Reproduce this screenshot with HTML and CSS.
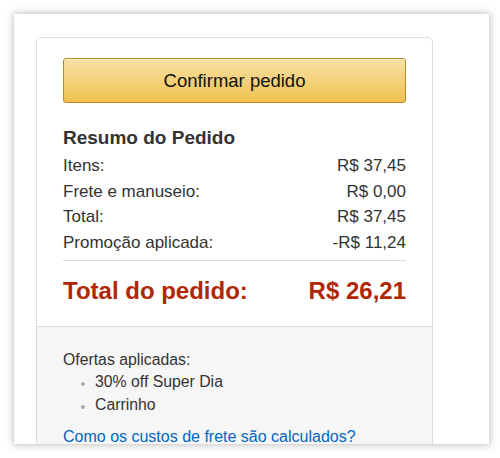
FILE: index.html
```html
<!DOCTYPE html>
<html lang="pt-BR">
<head>
<meta charset="utf-8">
<link rel="stylesheet" href="styles.css">
</head>
<body>
<div class="frame">
  <div class="box">
    <div class="top">
      <button class="confirm">Confirmar pedido</button>
      <h2 class="title">Resumo do Pedido</h2>
      <div class="row"><span>Itens:</span><span>R$ 37,45</span></div>
      <div class="row"><span>Frete e manuseio:</span><span>R$ 0,00</span></div>
      <div class="row"><span>Total:</span><span>R$ 37,45</span></div>
      <div class="row"><span>Promoção aplicada:</span><span>-R$ 11,24</span></div>
      <div class="grand"><span>Total do pedido:</span><span>R$ 26,21</span></div>
    </div>
    <div class="bottom">
      <div class="offers">Ofertas aplicadas:</div>
      <ul class="list">
        <li>30% off Super Dia</li>
        <li>Carrinho</li>
      </ul>
      <a class="link" href="#">Como os custos de frete são calculados?</a>
    </div>
  </div>
</div>
</body>
</html>
```
FILE: styles.css
```css
html, body {
  margin: 0;
  padding: 0;
  background: #ffffff;
}
body {
  font-family: "Liberation Sans", Arial, sans-serif;
  color: #333333;
  width: 500px;
  height: 458px;
  overflow: hidden;
}
.frame {
  margin: 14px 0 0 14px;
  width: 475px;
  height: 430px;
  background: #ffffff;
  box-shadow: 0 0 7px 1px rgba(0, 0, 0, 0.25);
  overflow: hidden;
  padding: 23px 0 0 22px;
  box-sizing: border-box;
}
.box {
  width: 397px;
  border: 1px solid #dddddd;
  border-radius: 5px 5px 0 0;
  box-sizing: border-box;
}
.top {
  padding: 20px 26px 22px 26px;
  border-bottom: 1px solid #dddddd;
}
.confirm {
  display: block;
  width: 100%;
  height: 45px;
  border: 1px solid #b38b2c;
  border-radius: 3px;
  background: linear-gradient(to bottom, #f8e1a6, #f0c24f);
  box-shadow: inset 0 1px 0 rgba(255, 255, 255, 0.5);
  font-family: "Liberation Sans", Arial, sans-serif;
  font-size: 18.5px;
  color: #111111;
  padding: 0;
}
.title {
  margin: 24px 0 4px 0;
  font-size: 19px;
  font-weight: bold;
  color: #333333;
  line-height: 22px;
}
.row {
  display: flex;
  justify-content: space-between;
  font-size: 17px;
  line-height: 25.5px;
  color: #333333;
}
.grand {
  display: flex;
  justify-content: space-between;
  border-top: 1px solid #dddddd;
  margin-top: 5px;
  padding-top: 17px;
  font-size: 24px;
  font-weight: bold;
  color: #b12704;
  line-height: 26px;
}
.bottom {
  background: #f6f6f6;
  padding: 22px 26px 20px 26px;
  min-height: 120px;
}
.offers {
  font-size: 15.8px;
  line-height: 22px;
  color: #333333;
}
.list {
  margin: 0;
  padding: 0 0 0 32px;
  font-size: 15.8px;
  line-height: 22.5px;
  color: #333333;
}
.list li::marker {
  color: #aaaaaa;
  font-size: 12px;
}
.link {
  display: block;
  margin-top: 11px;
  font-size: 16px;
  color: #0066c0;
  text-decoration: none;
  line-height: 20px;
}
```
